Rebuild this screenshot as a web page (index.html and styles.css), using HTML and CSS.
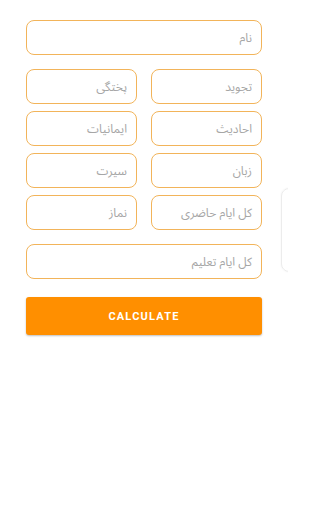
FILE: index.html
```html
<!DOCTYPE html>
<html lang="fa">
<head>
<meta charset="utf-8">
<link rel="stylesheet" href="styles.css">
</head>
<body>
<div class="screen">
  <form class="form">
    <div class="field full"><span class="ph">نام</span></div>
    <div class="grid">
      <div class="field"><span class="ph">تجوید</span></div>
      <div class="field"><span class="ph">پختگی</span></div>
      <div class="field"><span class="ph">احادیث</span></div>
      <div class="field"><span class="ph">ایمانیات</span></div>
      <div class="field"><span class="ph">زبان</span></div>
      <div class="field"><span class="ph">سیرت</span></div>
      <div class="field"><span class="ph">کل ایام حاضری</span></div>
      <div class="field"><span class="ph">نماز</span></div>
    </div>
    <div class="field full"><span class="ph">کل ایام تعلیم</span></div>
    <button type="button" class="btn">CALCULATE</button>
  </form>
  <div class="side-card"></div>
</div>
</body>
</html>
```

FILE: styles.css
```css
html, body {
  margin: 0;
  padding: 0;
  background: #ffffff;
  overflow: hidden;
}
.screen {
  position: relative;
  width: 288px;
  height: 512px;
  overflow: hidden;
  font-family: "Noto Sans Arabic UI", "Noto Sans Arabic", "Noto Naskh Arabic", "DejaVu Sans", sans-serif;
}
.form {
  display: flex;
  flex-direction: column;
  padding: 20px 26px 0 26px;
  direction: rtl;
}
.field {
  box-sizing: border-box;
  height: 35px;
  border: 1px solid #f2b45a;
  border-radius: 8px;
  display: flex;
  align-items: center;
  padding: 0 9px 1px 9px;
  background: #fff;
}
.ph {
  color: #a6a6a6;
  font-size: 12px;
}
.full {
  width: 236px;
}
.grid {
  display: grid;
  grid-template-columns: 111px 111px;
  column-gap: 14px;
  row-gap: 7px;
  margin: 14px 0;
}
.btn {
  margin-top: 18px;
  height: 38px;
  width: 236px;
  border: none;
  border-radius: 3px;
  background: #ff8f00;
  color: #ffffff;
  font-family: Roboto, "Liberation Sans", sans-serif;
  font-weight: 700;
  font-size: 11px;
  letter-spacing: 1.2px;
  box-shadow: 0 1px 2px rgba(0,0,0,0.25);
  padding: 0;
}
.side-card {
  position: absolute;
  left: 281px;
  top: 188px;
  width: 40px;
  height: 82px;
  border: 1px solid #ececec;
  border-radius: 8px;
  box-shadow: 0 0 2px rgba(0,0,0,0.06);
}
```
